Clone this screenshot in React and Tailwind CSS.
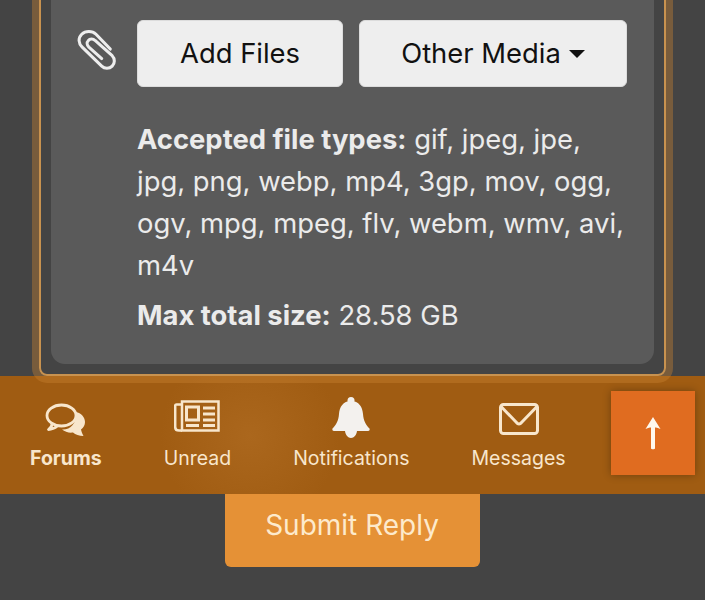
import React from 'react';

function PaperclipIcon() {
  return (
    <svg width="40" height="44" viewBox="0 0 42 46" fill="none" stroke="#eeeeee" strokeWidth="3.200" strokeLinecap="round" strokeLinejoin="round">
      <path d="M36 22 L21 6.500 C17 2.500 10 2.500 6 6.500 C2 10.500 2.500 16 6.500 20 L27 40 C30 43 35 43 38 40 C41 37 41 32 38 29 L20 13 C18 11 14.500 11 13 13 C11 15 11.500 18 13.500 20 L27 32" />
    </svg>
  );
}

function CommentsIcon() {
  return (
    <svg width="42" height="34" viewBox="0 0 42 34" fill="none">
      <path d="M31 9 C36 10 40 14 40 19 C40 22 38.500 24.500 36 26.500 C36.500 29 37.500 31 38.500 33 C34 33 30.500 31.500 28 29.500 C24 30 20 29 17 26.500 C25 27 32 21 31 9 Z" fill="#f8e6cc" />
      <ellipse cx="16.500" cy="12.500" rx="14.500" ry="10.500" stroke="#f8e6cc" strokeWidth="2.800" />
      <path d="M7 21 C7 23 5.500 25 3.500 26.500 C7 26.500 10 25 12.500 23" stroke="#f8e6cc" strokeWidth="2.800" strokeLinejoin="round" />
    </svg>
  );
}

function NewspaperIcon() {
  return (
    <svg width="46" height="32" viewBox="0 0 46 32" fill="none" stroke="#f8e6cc" strokeWidth="2.500">
      <rect x="8" y="1.500" width="36.500" height="29" />
      <path d="M8 4.500 H2.500 C1.500 4.500 1.200 5 1.200 5.500 V27 C1.200 29.500 2.500 30.500 5 30.500 H8" />
      <rect x="12.500" y="7" width="12" height="13" strokeWidth="3" />
      <path d="M29 8 H41 M29 14 H41 M29 20 H41 M12 25.500 H25 M29 25.500 H41" strokeWidth="2.800" />
    </svg>
  );
}

function BellIcon() {
  return (
    <svg width="38" height="41" viewBox="0 0 38 41" fill="#f3f1ee">
      <circle cx="19" cy="3.500" r="3.500" />
      <path d="M19 4 C11 4 7.500 10 7 17 C6.500 24 4 28 0.500 31.500 C0 32.500 0.500 34 2 34 H13 C13.500 38 16 41 19 41 C22 41 24.500 38 25 34 H36 C37.500 34 38 32.500 37.500 31.500 C34 28 31.500 24 31 17 C30.500 10 27 4 19 4 Z" />
    </svg>
  );
}

function EnvelopeIcon() {
  return (
    <svg width="40" height="32" viewBox="0 0 40 32" fill="none" stroke="#f8e6cc" strokeWidth="3" strokeLinejoin="round" strokeLinecap="round">
      <rect x="1.500" y="1.500" width="37" height="29" rx="3" />
      <path d="M2.500 4 L17.500 19.500 C19 21.500 21 21.500 22.500 19.500 L37.500 4" />
    </svg>
  );
}

function ArrowIcon() {
  return (
    <svg width="16" height="33" viewBox="0 0 16 33" fill="#fff8ee">
      <path d="M8 0 L15.500 12 C12.500 10.500 11 10.500 10 10.500 V31.500 C10 32.500 6 32.500 6 31.500 V10.500 C5 10.500 3.500 10.500 0.500 12 Z" />
    </svg>
  );
}

const navItems = [
  { label: 'Forums', icon: CommentsIcon, active: true, iconTop: 'pt-[6px]' },
  { label: 'Unread', icon: NewspaperIcon, iconTop: 'pt-[3px]' },
  { label: 'Notifications', icon: BellIcon, iconTop: 'pt-0' },
  { label: 'Messages', icon: EnvelopeIcon, iconTop: 'pt-[6px]' },
];

export default function App() {
  return (
    <div className="h-[600px] overflow-hidden bg-[#444444] font-['Inter',sans-serif]">
      {/* Attachment panel */}
      <div className="relative z-10 mx-[39px] mt-[-40px] h-[416px] rounded-b-lg border-2 border-[#c8924f] p-[10px] shadow-[0_0_0_7px_rgba(200,130,50,0.4)]">
        <div className="flex h-full gap-[19px] rounded-[14px] bg-[#5a5a5a] pl-[25px] pr-[26px] pt-[48px] text-[27.4px] leading-[42px] text-[#ebebeb]">
          <div className="mt-[8px] w-[42px] shrink-0">
            <PaperclipIcon />
          </div>
          <div className="min-w-0 flex-1">
            <div className="flex gap-4">
              <button className="h-[67px] w-[206px] rounded-md border border-[#dcdcdc] bg-[#eeeeee] pb-[2px] text-[#111111]">
                Add Files
              </button>
              <button className="flex h-[67px] w-[268px] items-center justify-center gap-2 rounded-md border border-[#dcdcdc] bg-[#eeeeee] pb-[2px] text-[#111111]">
                Other Media
                <span className="mt-[2px] h-0 w-0 border-x-[8px] border-t-[8px] border-x-transparent border-t-[#111111]" />
              </button>
            </div>
            <p className="mt-[31px]">
              <b className="font-bold">Accepted file types:</b> gif, jpeg, jpe, jpg, png, webp, mp4, 3gp, mov, ogg, ogv, mpg, mpeg, flv, webm, wmv, avi, m4v
            </p>
            <p className="mt-[8px]">
              <b className="font-bold">Max total size:</b> 28.58 GB
            </p>
          </div>
        </div>
      </div>

      {/* Bottom nav */}
      <nav className="flex h-[118px] gap-[62px] bg-[radial-gradient(circle_at_250px_60px,#ab671d_0,#a05c12_90px)] pl-[30px] pt-[21px]">
        {navItems.map(({ label, icon: Icon, active, iconTop }) => (
          <div key={label} className="flex flex-col items-center text-[#f8e6cc]">
            <div className={`h-[46px] ${iconTop}`}>
              <Icon />
            </div>
            <span className={`mt-[3px] text-[19.500px] leading-[24px] ${active ? 'font-bold' : ''}`}>{label}</span>
          </div>
        ))}
        <button className="ml-[-17px] mt-[-6px] flex h-[84px] w-[84px] shrink-0 items-center justify-center bg-[#e06c20] shadow-[0_0_8px_rgba(0,0,0,0.3)]">
          <ArrowIcon />
        </button>
      </nav>

      {/* Submit */}
      <div className="flex justify-center">
        <button className="ml-[-1px] h-[73px] w-[255px] rounded-b-md bg-[#e59136] pb-3 text-[28px] text-[#fdeacc]">
          Submit Reply
        </button>
      </div>
    </div>
  );
}
